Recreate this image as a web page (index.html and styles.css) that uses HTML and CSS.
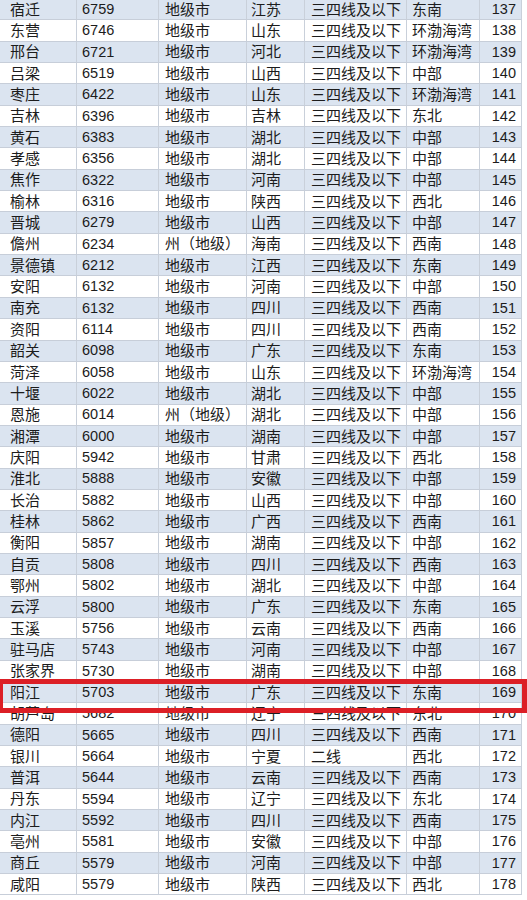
FILE: index.html
```html
<!DOCTYPE html>
<html lang="zh">
<head>
<meta charset="utf-8">
<title>城市排名</title>
<link rel="stylesheet" href="styles.css">
</head>
<body>
<div class="sheet">
  <div class="rows">
    <div class="row"><span class="c1">宿迁</span><span class="c2">6759</span><span class="c3">地级市</span><span class="c4">江苏</span><span class="c5">三四线及以下</span><span class="c6">东南</span><span class="c7">137</span></div>
    <div class="row"><span class="c1">东营</span><span class="c2">6746</span><span class="c3">地级市</span><span class="c4">山东</span><span class="c5">三四线及以下</span><span class="c6">环渤海湾</span><span class="c7">138</span></div>
    <div class="row"><span class="c1">邢台</span><span class="c2">6721</span><span class="c3">地级市</span><span class="c4">河北</span><span class="c5">三四线及以下</span><span class="c6">环渤海湾</span><span class="c7">139</span></div>
    <div class="row"><span class="c1">吕梁</span><span class="c2">6519</span><span class="c3">地级市</span><span class="c4">山西</span><span class="c5">三四线及以下</span><span class="c6">中部</span><span class="c7">140</span></div>
    <div class="row"><span class="c1">枣庄</span><span class="c2">6422</span><span class="c3">地级市</span><span class="c4">山东</span><span class="c5">三四线及以下</span><span class="c6">环渤海湾</span><span class="c7">141</span></div>
    <div class="row"><span class="c1">吉林</span><span class="c2">6396</span><span class="c3">地级市</span><span class="c4">吉林</span><span class="c5">三四线及以下</span><span class="c6">东北</span><span class="c7">142</span></div>
    <div class="row"><span class="c1">黄石</span><span class="c2">6383</span><span class="c3">地级市</span><span class="c4">湖北</span><span class="c5">三四线及以下</span><span class="c6">中部</span><span class="c7">143</span></div>
    <div class="row"><span class="c1">孝感</span><span class="c2">6356</span><span class="c3">地级市</span><span class="c4">湖北</span><span class="c5">三四线及以下</span><span class="c6">中部</span><span class="c7">144</span></div>
    <div class="row"><span class="c1">焦作</span><span class="c2">6322</span><span class="c3">地级市</span><span class="c4">河南</span><span class="c5">三四线及以下</span><span class="c6">中部</span><span class="c7">145</span></div>
    <div class="row"><span class="c1">榆林</span><span class="c2">6316</span><span class="c3">地级市</span><span class="c4">陕西</span><span class="c5">三四线及以下</span><span class="c6">西北</span><span class="c7">146</span></div>
    <div class="row"><span class="c1">晋城</span><span class="c2">6279</span><span class="c3">地级市</span><span class="c4">山西</span><span class="c5">三四线及以下</span><span class="c6">中部</span><span class="c7">147</span></div>
    <div class="row"><span class="c1">儋州</span><span class="c2">6234</span><span class="c3">州（地级）</span><span class="c4">海南</span><span class="c5">三四线及以下</span><span class="c6">西南</span><span class="c7">148</span></div>
    <div class="row"><span class="c1">景德镇</span><span class="c2">6212</span><span class="c3">地级市</span><span class="c4">江西</span><span class="c5">三四线及以下</span><span class="c6">东南</span><span class="c7">149</span></div>
    <div class="row"><span class="c1">安阳</span><span class="c2">6132</span><span class="c3">地级市</span><span class="c4">河南</span><span class="c5">三四线及以下</span><span class="c6">中部</span><span class="c7">150</span></div>
    <div class="row"><span class="c1">南充</span><span class="c2">6132</span><span class="c3">地级市</span><span class="c4">四川</span><span class="c5">三四线及以下</span><span class="c6">西南</span><span class="c7">151</span></div>
    <div class="row"><span class="c1">资阳</span><span class="c2">6114</span><span class="c3">地级市</span><span class="c4">四川</span><span class="c5">三四线及以下</span><span class="c6">西南</span><span class="c7">152</span></div>
    <div class="row"><span class="c1">韶关</span><span class="c2">6098</span><span class="c3">地级市</span><span class="c4">广东</span><span class="c5">三四线及以下</span><span class="c6">东南</span><span class="c7">153</span></div>
    <div class="row"><span class="c1">菏泽</span><span class="c2">6058</span><span class="c3">地级市</span><span class="c4">山东</span><span class="c5">三四线及以下</span><span class="c6">环渤海湾</span><span class="c7">154</span></div>
    <div class="row"><span class="c1">十堰</span><span class="c2">6022</span><span class="c3">地级市</span><span class="c4">湖北</span><span class="c5">三四线及以下</span><span class="c6">中部</span><span class="c7">155</span></div>
    <div class="row"><span class="c1">恩施</span><span class="c2">6014</span><span class="c3">州（地级）</span><span class="c4">湖北</span><span class="c5">三四线及以下</span><span class="c6">中部</span><span class="c7">156</span></div>
    <div class="row"><span class="c1">湘潭</span><span class="c2">6000</span><span class="c3">地级市</span><span class="c4">湖南</span><span class="c5">三四线及以下</span><span class="c6">中部</span><span class="c7">157</span></div>
    <div class="row"><span class="c1">庆阳</span><span class="c2">5942</span><span class="c3">地级市</span><span class="c4">甘肃</span><span class="c5">三四线及以下</span><span class="c6">西北</span><span class="c7">158</span></div>
    <div class="row"><span class="c1">淮北</span><span class="c2">5888</span><span class="c3">地级市</span><span class="c4">安徽</span><span class="c5">三四线及以下</span><span class="c6">中部</span><span class="c7">159</span></div>
    <div class="row"><span class="c1">长治</span><span class="c2">5882</span><span class="c3">地级市</span><span class="c4">山西</span><span class="c5">三四线及以下</span><span class="c6">中部</span><span class="c7">160</span></div>
    <div class="row"><span class="c1">桂林</span><span class="c2">5862</span><span class="c3">地级市</span><span class="c4">广西</span><span class="c5">三四线及以下</span><span class="c6">西南</span><span class="c7">161</span></div>
    <div class="row"><span class="c1">衡阳</span><span class="c2">5857</span><span class="c3">地级市</span><span class="c4">湖南</span><span class="c5">三四线及以下</span><span class="c6">中部</span><span class="c7">162</span></div>
    <div class="row"><span class="c1">自贡</span><span class="c2">5808</span><span class="c3">地级市</span><span class="c4">四川</span><span class="c5">三四线及以下</span><span class="c6">西南</span><span class="c7">163</span></div>
    <div class="row"><span class="c1">鄂州</span><span class="c2">5802</span><span class="c3">地级市</span><span class="c4">湖北</span><span class="c5">三四线及以下</span><span class="c6">中部</span><span class="c7">164</span></div>
    <div class="row"><span class="c1">云浮</span><span class="c2">5800</span><span class="c3">地级市</span><span class="c4">广东</span><span class="c5">三四线及以下</span><span class="c6">东南</span><span class="c7">165</span></div>
    <div class="row"><span class="c1">玉溪</span><span class="c2">5756</span><span class="c3">地级市</span><span class="c4">云南</span><span class="c5">三四线及以下</span><span class="c6">西南</span><span class="c7">166</span></div>
    <div class="row"><span class="c1">驻马店</span><span class="c2">5743</span><span class="c3">地级市</span><span class="c4">河南</span><span class="c5">三四线及以下</span><span class="c6">中部</span><span class="c7">167</span></div>
    <div class="row"><span class="c1">张家界</span><span class="c2">5730</span><span class="c3">地级市</span><span class="c4">湖南</span><span class="c5">三四线及以下</span><span class="c6">中部</span><span class="c7">168</span></div>
    <div class="row"><span class="c1">阳江</span><span class="c2">5703</span><span class="c3">地级市</span><span class="c4">广东</span><span class="c5">三四线及以下</span><span class="c6">东南</span><span class="c7">169</span></div>
    <div class="row"><span class="c1">胡芦岛</span><span class="c2">5682</span><span class="c3">地级市</span><span class="c4">辽宁</span><span class="c5">三四线及以下</span><span class="c6">东北</span><span class="c7">170</span></div>
    <div class="row"><span class="c1">德阳</span><span class="c2">5665</span><span class="c3">地级市</span><span class="c4">四川</span><span class="c5">三四线及以下</span><span class="c6">西南</span><span class="c7">171</span></div>
    <div class="row"><span class="c1">银川</span><span class="c2">5664</span><span class="c3">地级市</span><span class="c4">宁夏</span><span class="c5">二线</span><span class="c6">西北</span><span class="c7">172</span></div>
    <div class="row"><span class="c1">普洱</span><span class="c2">5644</span><span class="c3">地级市</span><span class="c4">云南</span><span class="c5">三四线及以下</span><span class="c6">西南</span><span class="c7">173</span></div>
    <div class="row"><span class="c1">丹东</span><span class="c2">5594</span><span class="c3">地级市</span><span class="c4">辽宁</span><span class="c5">三四线及以下</span><span class="c6">东北</span><span class="c7">174</span></div>
    <div class="row"><span class="c1">内江</span><span class="c2">5592</span><span class="c3">地级市</span><span class="c4">四川</span><span class="c5">三四线及以下</span><span class="c6">西南</span><span class="c7">175</span></div>
    <div class="row"><span class="c1">亳州</span><span class="c2">5581</span><span class="c3">地级市</span><span class="c4">安徽</span><span class="c5">三四线及以下</span><span class="c6">中部</span><span class="c7">176</span></div>
    <div class="row"><span class="c1">商丘</span><span class="c2">5579</span><span class="c3">地级市</span><span class="c4">河南</span><span class="c5">三四线及以下</span><span class="c6">中部</span><span class="c7">177</span></div>
    <div class="row"><span class="c1">咸阳</span><span class="c2">5579</span><span class="c3">地级市</span><span class="c4">陕西</span><span class="c5">三四线及以下</span><span class="c6">西北</span><span class="c7">178</span></div>
  </div>
  <div class="highlight"></div>
</div>
</body>
</html>
```
FILE: styles.css
```css
html, body {
  margin: 0;
  padding: 0;
  background: #ffffff;
}
body {
  width: 527px;
  height: 900px;
  overflow: hidden;
  font-family: "Liberation Sans", "Noto Sans CJK SC", sans-serif;
  font-size: 15px;
  color: #1c1c1c;
}
.sheet {
  position: relative;
  width: 527px;
  height: 900px;
}
.rows {
  width: 521px;
  margin-top: -1px;
  border-right: 1px solid #c9d0da;
}
.row {
  display: grid;
  grid-template-columns: 76px 82px 88px 58px 102px 73px 42px;
  height: 21.35px;
  box-sizing: border-box;
  border-bottom: 1px solid #c7ced9;
  background: #ffffff;
}
.row:nth-child(odd) {
  background: #dbe4f0;
}
.row span {
  display: flex;
  align-items: center;
  white-space: nowrap;
  overflow: hidden;
  border-left: 1px solid #c9d0da;
  line-height: 1;
  color: #1c1c1c;
}
.row .c1 {
  border-left: none;
  padding-left: 10px;
}
.row .c2 { padding-left: 5px; font-size: 14.5px; }
.row .c3 { padding-left: 6px; }
.row .c4 { padding-left: 4px; }
.row .c5 { padding-left: 6px; }
.row .c6 { padding-left: 5px; }
.row .c7 {
  justify-content: flex-end;
  padding-right: 5px;
  font-size: 14.5px;
}
.highlight {
  position: absolute;
  left: -2px;
  top: 680px;
  width: 529px;
  height: 34px;
  box-sizing: border-box;
  border: 5px solid #dc1f26;
}
```
